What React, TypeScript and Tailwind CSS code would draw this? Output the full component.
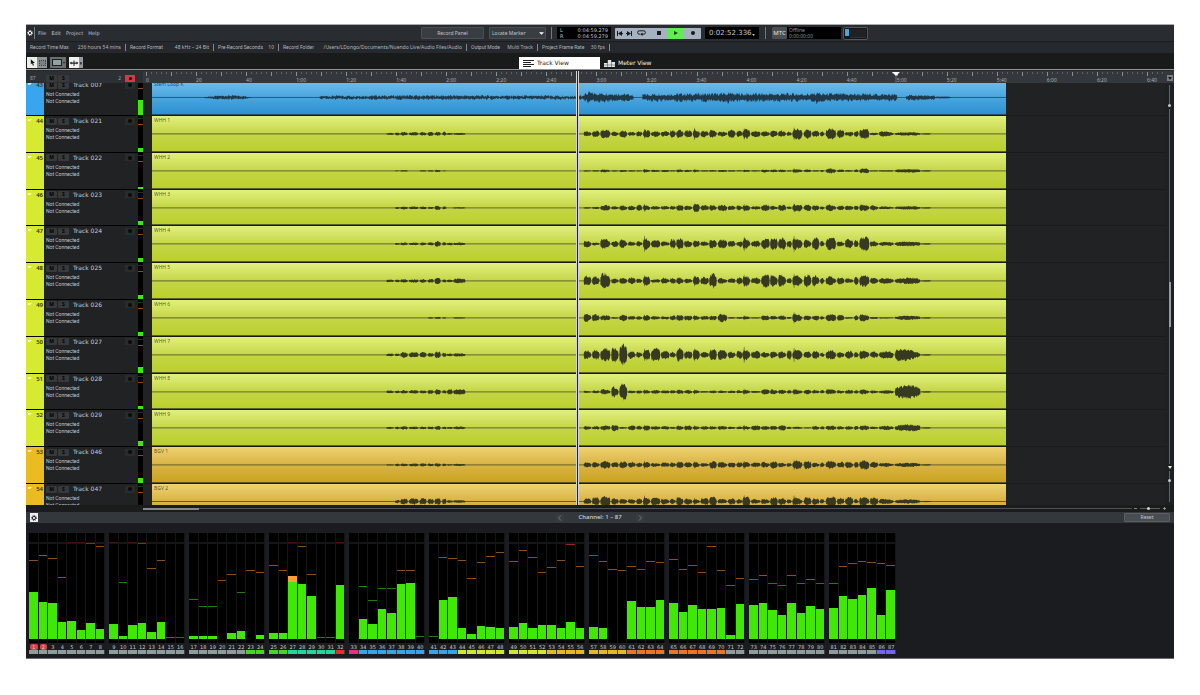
type Tone = 'blue' | 'lime' | 'amber';

type Track = {
  no: number;
  name: string;
  clip: string;
  tone: Tone;
  level: number;
  intro: number[];
  body: number[];
};

const TONES: Record<Tone, { tab: string; clip: string }> = {
  blue: { tab: 'bg-[#37a6ee]', clip: 'from-[#72beee] via-[#4aa6de] to-[#2b92d2]' },
  lime: { tab: 'bg-[#d6ea32]', clip: 'from-[#e2f07c] via-[#c5d647] to-[#bbd02b]' },
  amber: { tab: 'bg-[#ebbc22]', clip: 'from-[#efd272] via-[#d9b443] to-[#cba41c]' },
};

// phrase boundaries inside a clip, in thirds of a unit
const INTRO = [[50, 72], [76, 90], [92, 114], [118, 146], [150, 170], [174, 192], [195, 213], [218, 230], [232, 249], [251, 287]];
const BODY = [
  [13, 35], [38, 60], [63, 92], [96, 117], [120, 143], [146, 168], [171, 188], [191, 212], [215, 242], [245, 270],
  [272, 289], [291, 312], [315, 338], [341, 361], [364, 388], [390, 412], [416, 443], [446, 468], [472, 489], [490, 512],
  [516, 543], [546, 571], [573, 595], [597, 620], [623, 637], [640, 669], [674, 696], [699, 720], [723, 735], [740, 770],
  [774, 795], [798, 822], [825, 838], [841, 870], [873, 897], [900, 943], [948, 1024],
];

const FIRST: Track = { no: 43, name: 'Track 007', clip: 'Stem Loop K', tone: 'blue', level: 15, intro: [], body: [] };

const TRACKS: Track[] = [
  { no: 44, name: 'Track 021', clip: 'WHH 1', tone: 'lime', level: 4, intro: [3, 4, 5, 5, 5, 6, 6, 6, 3, 3], body: [9, 10, 13, 8, 10, 7, 10, 12, 8, 10, 13, 14, 11, 15, 11, 14, 9, 11, 12, 14, 9, 9, 9, 11, 8, 16, 13, 10, 10, 16, 12, 7, 9, 15, 5, 9, 5] },
  { no: 45, name: 'Track 022', clip: 'WHH 2', tone: 'lime', level: 2, intro: [0, 1, 2, 0, 2, 2, 3, 1, 0, 0], body: [2, 2, 5, 2, 3, 2, 2, 5, 4, 3, 2, 5, 4, 4, 2, 3, 3, 2, 2, 3, 2, 5, 4, 4, 2, 6, 4, 2, 3, 7, 4, 3, 5, 7, 2, 2, 5] },
  { no: 46, name: 'Track 023', clip: 'WHH 3', tone: 'lime', level: 4, intro: [0, 3, 4, 4, 4, 3, 6, 4, 0, 2], body: [3, 3, 8, 6, 9, 8, 9, 10, 6, 7, 7, 9, 8, 11, 8, 10, 9, 8, 9, 9, 5, 9, 8, 9, 4, 11, 9, 8, 6, 11, 6, 9, 7, 11, 8, 5, 5] },
  { no: 47, name: 'Track 024', clip: 'WHH 4', tone: 'lime', level: 4, intro: [0, 3, 4, 4, 4, 5, 8, 5, 4, 4], body: [12, 5, 18, 9, 14, 8, 9, 20, 11, 8, 14, 17, 12, 9, 9, 17, 13, 9, 9, 18, 9, 16, 17, 17, 11, 20, 14, 18, 11, 18, 9, 17, 14, 21, 10, 6, 7] },
  { no: 48, name: 'Track 025', clip: 'WHH 5', tone: 'lime', level: 4, intro: [4, 4, 5, 5, 5, 6, 10, 5, 4, 7], body: [15, 16, 28, 9, 10, 10, 8, 14, 5, 10, 9, 12, 8, 13, 11, 21, 10, 7, 10, 15, 9, 19, 22, 21, 8, 18, 18, 19, 12, 15, 11, 9, 12, 18, 10, 8, 9] },
  { no: 49, name: 'Track 026', clip: 'WHH 6', tone: 'lime', level: 4, intro: [0, 0, 0, 0, 0, 2, 3, 2, 0, 2], body: [13, 13, 8, 3, 9, 6, 7, 8, 6, 6, 7, 9, 8, 7, 6, 7, 12, 2, 3, 6, 2, 7, 7, 7, 4, 14, 9, 7, 6, 11, 8, 3, 8, 12, 3, 2, 6] },
  { no: 50, name: 'Track 027', clip: 'WHH 7', tone: 'lime', level: 6, intro: [4, 4, 8, 8, 8, 6, 10, 7, 4, 5], body: [15, 15, 20, 26, 31, 13, 10, 15, 20, 12, 10, 20, 12, 16, 8, 17, 17, 12, 12, 20, 11, 10, 12, 12, 15, 18, 9, 12, 9, 13, 11, 12, 10, 15, 9, 11, 24] },
  { no: 51, name: 'Track 028', clip: 'WHH 8', tone: 'lime', level: 3, intro: [4, 4, 5, 5, 4, 6, 8, 5, 8, 9], body: [4, 4, 9, 18, 23, 4, 5, 6, 5, 5, 5, 6, 5, 6, 3, 4, 4, 4, 6, 7, 4, 7, 8, 7, 5, 8, 7, 7, 5, 9, 6, 6, 5, 8, 5, 5, 20] },
  { no: 52, name: 'Track 029', clip: 'WHH 9', tone: 'lime', level: 5, intro: [3, 4, 5, 4, 4, 5, 6, 4, 3, 4], body: [6, 5, 7, 9, 3, 7, 6, 7, 5, 5, 4, 8, 7, 6, 5, 6, 7, 4, 4, 7, 7, 6, 8, 8, 4, 3, 2, 7, 5, 6, 6, 6, 6, 7, 5, 6, 10] },
  { no: 53, name: 'Track 046', clip: 'BGV 1', tone: 'amber', level: 5, intro: [2, 4, 4, 4, 4, 4, 5, 4, 2, 3], body: [8, 9, 11, 7, 10, 8, 7, 10, 7, 7, 8, 10, 9, 9, 7, 11, 10, 8, 8, 10, 7, 10, 11, 8, 7, 12, 13, 8, 9, 12, 9, 11, 9, 14, 8, 7, 6] },
];

const LAST: Track = { no: 54, name: 'Track 047', clip: 'BGV 2', tone: 'amber', level: 0, intro: [0, 5, 9, 9, 10, 8, 10, 9, 4, 4], body: [9, 13, 16, 9, 10, 9, 9, 15, 11, 10, 11, 15, 9, 9, 11, 14, 9, 10, 9, 16, 8, 9, 14, 10, 8, 15, 13, 10, 10, 15, 10, 13, 9, 16, 13, 10, 6] };

const noise = (n: number) => {
  const v = Math.sin(n * 12.9898) * 43758.5453;
  return v - Math.floor(v);
};

// closed outline for one burst of sound, mirrored round the centre line
function burst(from: number, to: number, amp: number, seed: number, rough: number, fade = 0, round = 0.25) {
  if (!amp) return '';
  const up: string[] = [];
  const down: string[] = [];
  const steps = Math.max(3, Math.round((to - from) * 1.5));
  for (let i = 0; i <= steps; i++) {
    const t = i / steps;
    const edge = Math.min(1, Math.pow(Math.sin(Math.PI * t) + 0.02, round)) * (1 - fade * t);
    const x = (from + (to - from) * t).toFixed(1);
    const a = amp * edge * (1 - rough + rough * 1.4 * noise(seed + i));
    const b = amp * edge * (1 - rough + rough * 1.4 * noise(seed + i + 500));
    up.push(`${x} ${(18 - a).toFixed(1)}`);
    down.unshift(`${x} ${(18 + b).toFixed(1)}`);
  }
  return `M${up.join('L')}L${down.join('L')}Z`;
}

function wavePath(track: Track) {
  if (track.tone === 'blue') {
    return [
      burst(52, 100, 1, 3, 0.7), burst(60, 96, 2, 5, 0.7), burst(168, 392, 2, 11, 0.8, 0, 0.1),
      burst(385, 434, 2, 23, 0.9, 0, 0.1), burst(433, 482, 5, 29, 0.6, 0.35, 0.1), burst(434, 446, 6, 31, 0.7, 0.4),
      burst(491, 746, 4, 37, 0.75, 0.1, 0.06), burst(491, 746, 2, 61, 0.1, 0, 0.06), burst(570, 582, 5, 41, 0.8),
      burst(660, 672, 5, 43, 0.8), burst(755, 784, 3, 47, 0.6, 0.2, 0.15), burst(784, 800, 1, 51, 0.2),
    ].join('');
  }
  const intro = INTRO.map(([a, b], i) => burst(218 + a / 3, 218 + b / 3, (track.intro[i] || 0) / 3, track.no * 31 + i * 7, 0.4));
  const body = BODY.map(([a, b], i) => {
    const fade = i === 36 && track.no === 50 ? 0.7 : noise(track.no * 3 + i) > 0.6 ? 0.4 : 0;
    return burst(428 + a / 3, 428 + b / 3, track.body[i] / 3, track.no * 57 + i * 13, 0.4, i === 36 && track.no !== 50 ? 0 : fade);
  });
  const spikes = [7, 13, 19, 25].map((i) => {
    const x = 429 + BODY[i][0] / 3;
    return burst(x, x + 1, (track.body[i] * 1.25) / 3, 1, 0);
  });
  return intro.join('') + body.join('') + spikes.join('') + burst(770, 780, 0.6, 2, 0.3);
}

function Gear({ className }: { className: string }) {
  return (
    <svg viewBox="0 0 12 12" className={className} fill="none" stroke="currentColor">
      <circle cx="6" cy="6" r="3.2" strokeWidth="2" />
      <circle cx="6" cy="6" r="5" strokeWidth="1.8" strokeDasharray="2 1.93" />
    </svg>
  );
}

function MuteSolo() {
  return (
    <>
      {['M', 'S'].map((l) => (
        <button key={l} className="h-[7px] w-[11px] rounded-[1px] bg-[#37393b] text-center text-[5px] leading-[7px] font-bold text-black">{l}</button>
      ))}
    </>
  );
}

function TrackRow({ track }: { track: Track }) {
  const tone = TONES[track.tone];
  return (
    <div className="flex h-full min-h-[36px] w-full">
      <div className="flex w-[117px] shrink-0 border-b border-black">
        <div className={`flex w-[18px] items-start justify-between pt-px pr-px pl-[2px] ${tone.tab}`}>
          <svg viewBox="0 0 4 4" className="mt-[2px] h-[4px] w-[4px]"><path d="M0 0H4L2 2H0Z" fill="#fff" fillOpacity=".75" /></svg>
          <span className="text-[6px] leading-[8px] font-semibold text-[#33351a]">{track.no}</span>
        </div>
        <div className="flex-1 pt-px pl-[2px]">
          <div className="flex h-[8px] items-center gap-px">
            <MuteSolo />
            <span className="ml-[3px] flex-1 font-['DejaVu_Sans',sans-serif] text-[6px] leading-[8px] whitespace-nowrap text-[#cbced0]">{track.name}</span>
            <button aria-label={`Arm ${track.name}`} className="mr-[3px] flex h-[7px] w-[10px] items-center justify-center bg-[#292b2c]">
              <span className="h-[4px] w-[4px] rounded-full bg-[#0b0b0b]" />
            </button>
          </div>
          <div className="mt-[2px] font-[Roboto,sans-serif] text-[5px] leading-[7px] text-[#c4c7ca]">
            <p>Not Connected</p>
            <p>Not Connected</p>
          </div>
        </div>
        <div className="flex w-[5px] flex-col bg-black">
          <div className="mt-[2px] h-px bg-[#2c2c2c]" />
          <div className="mt-[5px] h-px bg-[#8a4d18]" />
          <div className="mt-auto bg-[#3fe80c]" style={{ height: track.level }} />
        </div>
      </div>
      <div className="flex-1 border-b border-[#191a1a] pl-[9px]">
        <div className={`relative h-full w-[84.3%] border-b border-black/60 bg-linear-to-b ${tone.clip}`}>
          <svg viewBox="0 0 855 35" preserveAspectRatio="none" className="block h-full w-full">
            <path d="M0 18H855" stroke="#3c4022" strokeWidth="1" strokeOpacity=".75" />
            <path d={wavePath(track)} fill={track.tone === 'blue' ? '#20394a' : '#373a20'} />
          </svg>
          <span className="absolute top-px left-[2px] text-[5px] leading-[7px] text-black/65">{track.clip}</span>
        </div>
      </div>
    </div>
  );
}

function Ruler() {
  const marks = Array.from({ length: 21 }, (_, i) => i * 20);
  return (
    <div className="flex h-[12px] bg-[#34383d]">
      <div className="flex w-[117px] items-center gap-px bg-[#2c2f33] pt-[2px] pr-[8px] text-[5px] leading-[7px] text-[#9aa0a4]">
        <span className="w-[19px] pl-[4px]">87</span>
        <MuteSolo />
        <span className="flex-1 pr-[3px] text-right">2</span>
        <button aria-label="Arm all" className="flex h-[7px] w-[10px] items-center justify-center bg-[#d33a45]">
          <span className="h-[3px] w-[3px] rounded-full bg-black" />
        </button>
      </div>
      <div className="flex flex-1 overflow-hidden pt-px pl-[3px]">
        {marks.map((s) => (
          <div key={s} className={s === 400 ? 'flex-[8] basis-0' : 'flex-[20] basis-0'}>
            <div className="flex h-[5px] items-start">
              {Array.from({ length: s === 400 ? 4 : 10 }, (_, i) => (
                <span key={i} className={i % 5 === 0 ? 'h-[4px] flex-1 border-l border-[#8a9093]' : 'h-[2px] flex-1 border-l border-[#5b6164]'} />
              ))}
            </div>
            <span className="block text-[5px] leading-[6px] text-[#a0aeb2]">
              {s < 60 ? s : `${Math.floor(s / 60)}:${String(s % 60).padStart(2, '0')}`}
            </span>
          </div>
        ))}
      </div>
      <button aria-label="Ruler format" className="mt-[4px] mr-px flex h-[6px] w-[6px] items-center justify-center bg-[#7b8084]">
        <svg viewBox="0 0 4 3" className="h-[3px] w-[4px]"><path d="M0 0H4L2 3Z" fill="#1c1c1c" /></svg>
      </button>
    </div>
  );
}

// level and peak per channel: bar height from the floor, peak from the top
const LEVELS = [
  47, 37, 36, 17, 18, 9, 16, 10, 15, 3, 14, 16, 7, 17, 0, 0, 3, 3, 3, 0, 6, 8, 0, 4, 6, 6, 63, 55, 43, 0, 0, 54,
  0, 20, 15, 30, 26, 55, 56, 0, 0, 39, 42, 11, 5, 13, 12, 11, 12, 16, 11, 14, 14, 11, 17, 11, 12, 11, 0, 0, 38, 32, 32, 39,
  36, 27, 34, 30, 30, 31, 4, 35, 34, 36, 29, 24, 36, 26, 33, 30, 31, 43, 40, 44, 51, 24, 49,
];
const PEAKS = [
  27, 22, 25, 44, 9, 9, 10, 13, 9, 49, 9, 10, 35, 27, 104, 104, 66, 73, 73, 47, 41, 59, 37, 39, 32, 37, 9, 13, 41, 104, 104, 9,
  -1, 53, 67, 55, 55, 37, 37, 103, 103, 24, 25, 27, 45, 29, 23, 19, 28, 17, 24, 39, 34, 27, 11, 33, 22, 28, 36, 37, 33, 36, 28, 29,
  26, 36, 32, 39, 13, 37, 52, 45, 46, 42, 50, 52, 42, 50, 46, 50, 50, 33, 30, 28, 29, 30, 32,
];

function stripColor(ch: number) {
  if (ch <= 22) return 'bg-[#8f9c9c]';
  if (ch <= 26) return 'bg-[#45d81f]';
  if (ch <= 31) return 'bg-[#20d69a]';
  if (ch === 32) return 'bg-[#ee2b25]';
  if (ch === 33) return 'bg-[#ec2c80]';
  if (ch <= 43) return 'bg-[#37a4ea]';
  if (ch <= 52) return 'bg-[#d2e62f]';
  if (ch <= 60) return 'bg-[#e6b81e]';
  if (ch <= 70) return 'bg-[#ec7425]';
  if (ch <= 85) return 'bg-[#8f9c9c]';
  return 'bg-[#7565ee]';
}

function peakColor(top: number) {
  if (top < 12) return top === 9 ? 'bg-[#4a0f0c]' : 'bg-[#94261c]';
  return top < 48 ? 'bg-[#8a4f1c]' : 'bg-[#1f7d0a]';
}

function Channel({ ch }: { ch: number }) {
  const level = LEVELS[ch - 1];
  const peak = PEAKS[ch - 1];
  return (
    <div className="flex-1">
      <div className="relative flex h-[110px] flex-col justify-end border-r border-[#131415] bg-black pb-[4px]">
        <div className="absolute inset-x-0 top-[9px] h-[2px] bg-[#151616]" />
        {peak >= 0 && <div className={`absolute inset-x-0 h-px ${peakColor(peak)}`} style={{ top: peak }} />}
        <div className="bg-[#3fe905]" style={{ height: level }}>
          {level > 60 && <div className="h-[6px] bg-[#ff9f35]" />}
        </div>
      </div>
      <div className={`mt-px h-[6px] text-center font-['DejaVu_Sans',sans-serif] text-[5px] leading-[6px] text-[#c8cccd] ${ch < 3 ? 'mx-px rounded-[2px] bg-[#d8434b]' : ''}`}>{ch}</div>
      <div className={`h-[4px] border-r border-[#3c4245] ${stripColor(ch)}`} />
    </div>
  );
}

function Transport() {
  return (
    <div className="ml-[4px] flex h-[11px] w-[86px] items-stretch overflow-hidden rounded-[1px] bg-[#a7b2c0]">
      <button aria-label="Previous marker" className="flex w-[9px] items-center justify-center">
        <svg viewBox="0 0 6 5" className="h-[5px] w-[6px]"><path d="M0 0H1V5H0ZM5 0V5L1 2.5ZM5 2H6V3H5Z" fill="#17191c" /></svg>
      </button>
      <button aria-label="Next marker" className="flex w-[9px] items-center justify-center">
        <svg viewBox="0 0 6 5" className="h-[5px] w-[6px]"><path d="M5 0H6V5H5ZM1 0V5L5 2.5ZM0 2H1V3H0Z" fill="#17191c" /></svg>
      </button>
      <button aria-label="Cycle" className="flex w-[17px] items-center justify-center">
        <svg viewBox="0 0 9 6" className="h-[6px] w-[9px]" fill="none" stroke="#17191c">
          <path d="M3 4.2H2.3A1.7 1.7 0 0 1 2.3.8H6.7A1.7 1.7 0 0 1 6.7 4.2H5" />
          <path d="M5.5 2.5V6L3.2 4.2Z" fill="#17191c" stroke="none" />
        </svg>
      </button>
      <button aria-label="Stop" className="flex w-[17px] items-center justify-center"><span className="h-[4px] w-[4px] bg-[#17191c]" /></button>
      <button aria-label="Play" className="flex w-[17px] items-center justify-center bg-[#5cf04c]">
        <svg viewBox="0 0 4 4" className="h-[4px] w-[4px]"><path d="M0 0L4 2L0 4Z" fill="#123a10" /></svg>
      </button>
      <button aria-label="Record" className="flex flex-1 items-center justify-center"><span className="h-[4px] w-[4px] rounded-full bg-[#17191c]" /></button>
    </div>
  );
}

const INFO = [
  ['Record Time Max', '236 hours 54 mins', 'w-[100px]'],
  ['Record Format', '48 kHz – 24 Bit', 'w-[88px]'],
  ['Pre-Record Seconds', '10', 'w-[65px]'],
  ['Record Folder', '/Users/LDongo/Documents/Nuendo Live/Audio Files/Audio', 'w-[188px]'],
  ['Output Mode', 'Multi Track', 'w-[71px]'],
  ['Project Frame Rate', '30 fps', 'w-[72px]'],
];

export default function App() {
  return (
    <div className="bg-white px-[26px] pt-[24px] pb-[36px] font-['Noto_Sans',sans-serif]">
      <div className="border-t border-b border-t-[#a9abad] border-b-[#6d7072] bg-[#1b1c1f] text-[#c3c6c9]">

        {/* MENU AND TRANSPORT */}
        <header className="flex h-[17px] items-center border-b border-[#1b1d20] bg-[#292c31] text-[5px] leading-[7px]">
          <nav className="flex w-[395px] items-center">
            <button aria-label="Settings" className="flex h-[12px] w-[9px] items-center border-r border-[#7d8083] pl-px">
              <Gear className="h-[6px] w-[6px] text-white" />
            </button>
            <div className="flex gap-[5px] pl-[3px] font-['DejaVu_Sans',sans-serif]">
              {['File', 'Edit', 'Project', 'Help'].map((m) => <button key={m}>{m}</button>)}
            </div>
          </nav>
          <button className="h-[12px] w-[63px] rounded-[1px] border border-[#4b4e52] bg-[#393c40]">Record Panel</button>
          <div className="relative ml-[5px] w-[57px]">
            <select aria-label="Locate Marker" className="block h-[12px] w-full appearance-none rounded-[1px] border border-[#4b4e52] bg-[#393c40] pl-[2px] leading-[10px]">
              <option>Locate Marker</option>
            </select>
            <svg viewBox="0 0 4 2" className="pointer-events-none absolute top-[5px] right-[2px] h-[3px] w-[5px]"><path d="M0 0H4L2 2Z" fill="#fff" /></svg>
          </div>
          <div className="mx-[5px] h-[12px] w-px bg-[#75787b]" />
          <div className="flex h-[12px] w-[54px] justify-between bg-black px-[3px] font-['DejaVu_Sans',sans-serif] leading-[6px]">
            <p>L<br />R</p>
            <p>0:04:59.279<br />0:04:59.279</p>
          </div>
          <Transport />
          <div className="ml-[4px] flex h-[12px] w-[54px] items-center justify-between bg-black px-[4px] font-['DejaVu_Sans',sans-serif] text-[7px]">
            <span>0:02:52.336</span>
            <svg viewBox="0 0 4 3" className="mt-[4px] h-[2px] w-[3px]"><path d="M0 0H4L2 3Z" fill="#ccc" /></svg>
          </div>
          <div className="mx-[6px] h-[12px] w-px bg-[#75787b]" />
          <div className="flex h-[12px] w-[69px] bg-black">
            <button className="w-[15px] rounded-[1px] bg-[#4b4e52] text-center text-[6px] text-[#e2e4e5]">MTC</button>
            <p className="pl-[2px] leading-[6px] text-[#87919b]">Offline<br />0:00:00:00</p>
          </div>
          <div className="ml-[2px] flex h-[13px] w-[25px] rounded-[2px] border border-[#56595c] bg-[#141518] p-px">
            <span className="h-[7px] w-[4px] bg-[#4ba3dc]" />
            <span className="ml-px flex-1 border-b border-[#2e3134] bg-[#1f2124]" />
          </div>
        </header>

        {/* RECORD INFO */}
        <dl className="flex h-[11px] items-center bg-[#25282c] text-[5px] leading-[7px] whitespace-nowrap text-[#b4b7ba]">
          {INFO.map(([label, value, width]) => (
            <div key={label} className={`flex justify-between border-r border-[#85888a] px-[4px] ${width}`}>
              <dt className="font-[Roboto,sans-serif]">{label}</dt>
              <dd>{value}</dd>
            </div>
          ))}
        </dl>

        {/* TOOLS AND VIEW TABS */}
        <div className="grid h-[16px] grid-cols-[1fr_auto_1fr] items-end bg-[#191a1a]">
          <div className="mb-px ml-px flex h-[11px]">
            <button aria-label="Select" className="flex w-[10px] items-center justify-center bg-[#eceeee]">
              <svg viewBox="0 0 6 8" className="h-[7px] w-[5px]"><path d="M1 0V6L2.5 5L3.5 8L4.7 7.4L3.7 4.6H6Z" fill="#111" /></svg>
            </button>
            <button aria-label="Range" className="flex w-[10px] items-center justify-center bg-[#8d9394]">
              <span className="h-[6px] w-[7px] border border-dotted border-[#444] bg-[#7b8182]" />
            </button>
            <button aria-label="Zoom area" className="ml-[3px] flex w-[16px] items-center gap-px bg-[#6a6f71] pl-[2px]">
              <span className="h-[7px] w-[10px] border border-[#1d2020] bg-[#93a19e]" />
              <svg viewBox="0 0 3 2" className="h-[2px] w-[2px]"><path d="M0 0H3L1.5 2Z" fill="#111" /></svg>
            </button>
            <button aria-label="Snap" className="ml-[3px] flex w-[14px] items-center bg-linear-to-r from-[#f1f3f3] from-70% to-[#969c9d] to-70%">
              <svg viewBox="0 0 14 8" className="h-[8px] w-[14px]"><path d="M.5 4L2.5 2.5V3.5H4.5V1.5H5.5V3.5H7.5V2.5L9.5 4L7.5 5.5V4.8H5.5V7H4.5V4.8H2.5V5.5ZM11.2 3H12.6V5.5H11.2Z" fill="#202222" /></svg>
            </button>
          </div>
          <div role="tablist" className="flex font-['DejaVu_Sans',sans-serif] text-[6px] leading-[12px]">
            <button role="tab" aria-selected="true" className="flex h-[12px] w-[81px] items-center gap-[3px] bg-white pl-[4px] text-[#17191b]">
              <svg viewBox="0 0 11 7" className="h-[7px] w-[11px]"><path d="M0 .5H11M0 2.5H8M0 4.5H11M0 6.5H8" stroke="#222" /></svg>
              Track View
            </button>
            <button role="tab" aria-selected="false" className="flex h-[12px] w-[81px] items-center gap-[3px] pl-[4px] text-[#f0f1f1]">
              <svg viewBox="0 0 11 7" className="h-[7px] w-[11px]"><path d="M0 3H3.4V7H0ZM3.8 0H7.2V7H3.8ZM7.6 2H11V7H7.6Z" fill="#e4e6e6" /><path d="M0 5H11" stroke="#191a1a" strokeWidth=".4" /></svg>
              Meter View
            </button>
          </div>
        </div>
        <div className="h-[2px] border-b border-[#26282a] bg-[#939597]" />

        {/* TRACK VIEW */}
        <main className="relative">
          <Ruler />
          <div className="flex bg-[#202224]">
            <div className="flex-1">
              <div className="flex h-[33px] items-end overflow-hidden">
                <TrackRow track={FIRST} />
              </div>
              <div className="grid h-[368px] grid-rows-10">
                {TRACKS.map((t) => <TrackRow key={t.no} track={t} />)}
              </div>
              <div className="h-[21px] overflow-hidden">
                <TrackRow track={LAST} />
              </div>
            </div>
            {/* vertical scroller and height slider */}
            <div className="flex w-[9px] flex-col items-center bg-[#1e2021] pt-[2px]">
              <div className="h-[19px] w-px bg-[#606466]" />
              <div className="h-[3px] w-[3px] rounded-full bg-[#c8caca]" />
              <div className="mt-[2px] h-[173px] w-px bg-[#606466]" />
              <div className="h-[45px] w-[2px] bg-[#9b9e9f]" />
              <div className="flex-1 border-l border-[#606466]" />
              <svg viewBox="0 0 4 3" className="my-[2px] h-[3px] w-[4px]"><path d="M0 0H4L2 3Z" fill="#eee" /></svg>
              <div className="h-[8px] w-px bg-[#606466]" />
              <div className="h-[3px] w-[3px] rounded-full bg-[#c8caca]" />
              <div className="mb-[3px] h-[20px] w-px bg-[#606466]" />
            </div>
          </div>

          {/* playhead and locator, laid over the lanes */}
          <div className="pointer-events-none absolute inset-y-0 right-[6px] left-[117px]">
            <div className="absolute inset-y-0 left-[42.2%] w-[3px] border-x border-white/80 bg-[#25281c]" />
            <svg viewBox="0 0 8 12" className="absolute top-px left-[73.1%] h-[12px] w-[8px]">
              <path d="M0 0H8L4 4Z" fill="#fff" /><path d="M4 4V12" stroke="#5f8f95" strokeWidth=".7" />
            </svg>
          </div>
        </main>

        {/* HORIZONTAL SCROLLER */}
        <div className="flex h-[7px] items-center bg-[#1a1b1b] pr-[8px] pl-[117px]">
          <div className="h-[2px] w-[56px] bg-[#85888a]" />
          <div className="h-px flex-1 bg-[#505355]" />
          <div className="mr-[3px] ml-[2px] h-px w-[3px] bg-[#85888a]" />
          <input type="range" aria-label="Zoom" defaultValue={40} className="h-px w-[20px] appearance-none bg-[#5a5d5f] [&::-webkit-slider-thumb]:h-[3px] [&::-webkit-slider-thumb]:w-[3px] [&::-webkit-slider-thumb]:appearance-none [&::-webkit-slider-thumb]:rounded-full [&::-webkit-slider-thumb]:bg-[#d0d2d2]" />
          <svg viewBox="0 0 3 3" className="ml-[3px] h-[3px] w-[3px]"><path d="M1.5 0V3M0 1.5H3" stroke="#a0a3a4" strokeWidth=".8" /></svg>
        </div>

        {/* METER BRIDGE */}
        <section>
          <div className="grid h-[11px] grid-cols-[1fr_auto_1fr] items-center bg-[#34373c] px-[4px]">
            <button aria-label="Meter settings" className="flex h-[9px] w-[8px] items-center justify-center bg-[#eef0f0]">
              <Gear className="h-[6px] w-[6px] text-[#222]" />
            </button>
            <div className="flex items-center text-[6px] leading-[9px] font-medium text-[#d0d3d5]">
              <button aria-label="Previous channels" className="bg-[#383b41] text-[#717579]">
                <svg viewBox="0 0 8 8" className="h-[8px] w-[8px]"><path d="M5 1.5L2.5 4L5 6.5" fill="none" stroke="currentColor" /></svg>
              </button>
              <span className="w-[72px] text-center">Channel: 1 – 87</span>
              <button aria-label="Next channels" className="bg-[#383b41] text-[#717579]">
                <svg viewBox="0 0 8 8" className="h-[8px] w-[8px]"><path d="M3 1.5L5.5 4L3 6.5" fill="none" stroke="currentColor" /></svg>
              </button>
            </div>
            <button className="h-[9px] w-[46px] justify-self-end rounded-[1px] border border-[#5c6064] bg-[#494d52] text-[5px] leading-[7px]">Reset</button>
          </div>
          <div className="flex h-[135px] gap-[4px] bg-[#1b1c1f] pt-[10px] pl-[3px]">
            {Array.from({ length: 11 }, (_, g) => (
              <div key={g} className={g === 10 ? 'flex w-[67px]' : 'flex w-[76px]'}>
                {Array.from({ length: g === 10 ? 7 : 8 }, (_, i) => <Channel key={i} ch={g * 8 + i + 1} />)}
              </div>
            ))}
          </div>
        </section>
      </div>
    </div>
  );
}
